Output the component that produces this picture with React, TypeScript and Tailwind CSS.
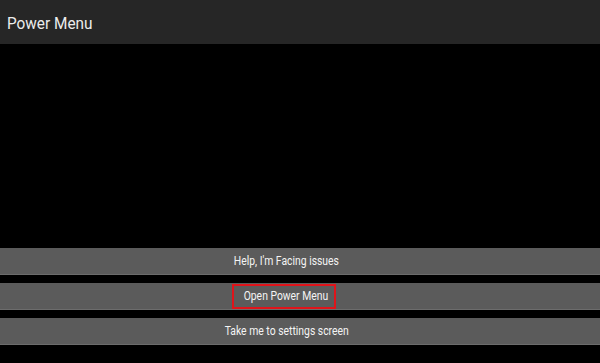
export default function App() {
  const font = { fontFamily: 'Roboto, "Liberation Sans", sans-serif' };
  return (
    <div className="flex h-[363px] w-[600px] flex-col bg-black" style={font}>
      <div className="flex h-[44px] shrink-0 items-center bg-[#262626] pl-[7px]">
        <span className="inline-block origin-left scale-x-[0.93] pt-[4px] text-[16.5px] text-[#ececec]">
          Power Menu
        </span>
      </div>
      <div className="h-[204px] shrink-0" />
      <div className="flex flex-col gap-[8px]">
        <div className="flex h-[27px] items-center justify-center border-b border-[#6c6c6c] bg-[#5b5b5b] pr-[27px]">
          <span className="inline-block scale-x-[0.83] pt-[1px] text-[12.5px] text-[#f4f4f4]">
            Help, I'm Facing issues
          </span>
        </div>
        <div className="flex h-[27px] items-center justify-center border-b border-[#6c6c6c] bg-[#5b5b5b] pr-[27px]">
          <div className="mr-[5px] flex h-[25px] w-[104px] items-center justify-center border-2 border-[#e0141a] pl-[4px]">
            <span className="inline-block scale-x-[0.83] pt-[1px] text-[12.5px] whitespace-nowrap text-[#f4f4f4]">
              Open Power Menu
            </span>
          </div>
        </div>
        <div className="flex h-[27px] items-center justify-center border-b border-[#6c6c6c] bg-[#5b5b5b] pr-[27px]">
          <span className="inline-block scale-x-[0.83] pt-[1px] text-[12.5px] text-[#f4f4f4]">
            Take me to settings screen
          </span>
        </div>
      </div>
    </div>
  );
}
